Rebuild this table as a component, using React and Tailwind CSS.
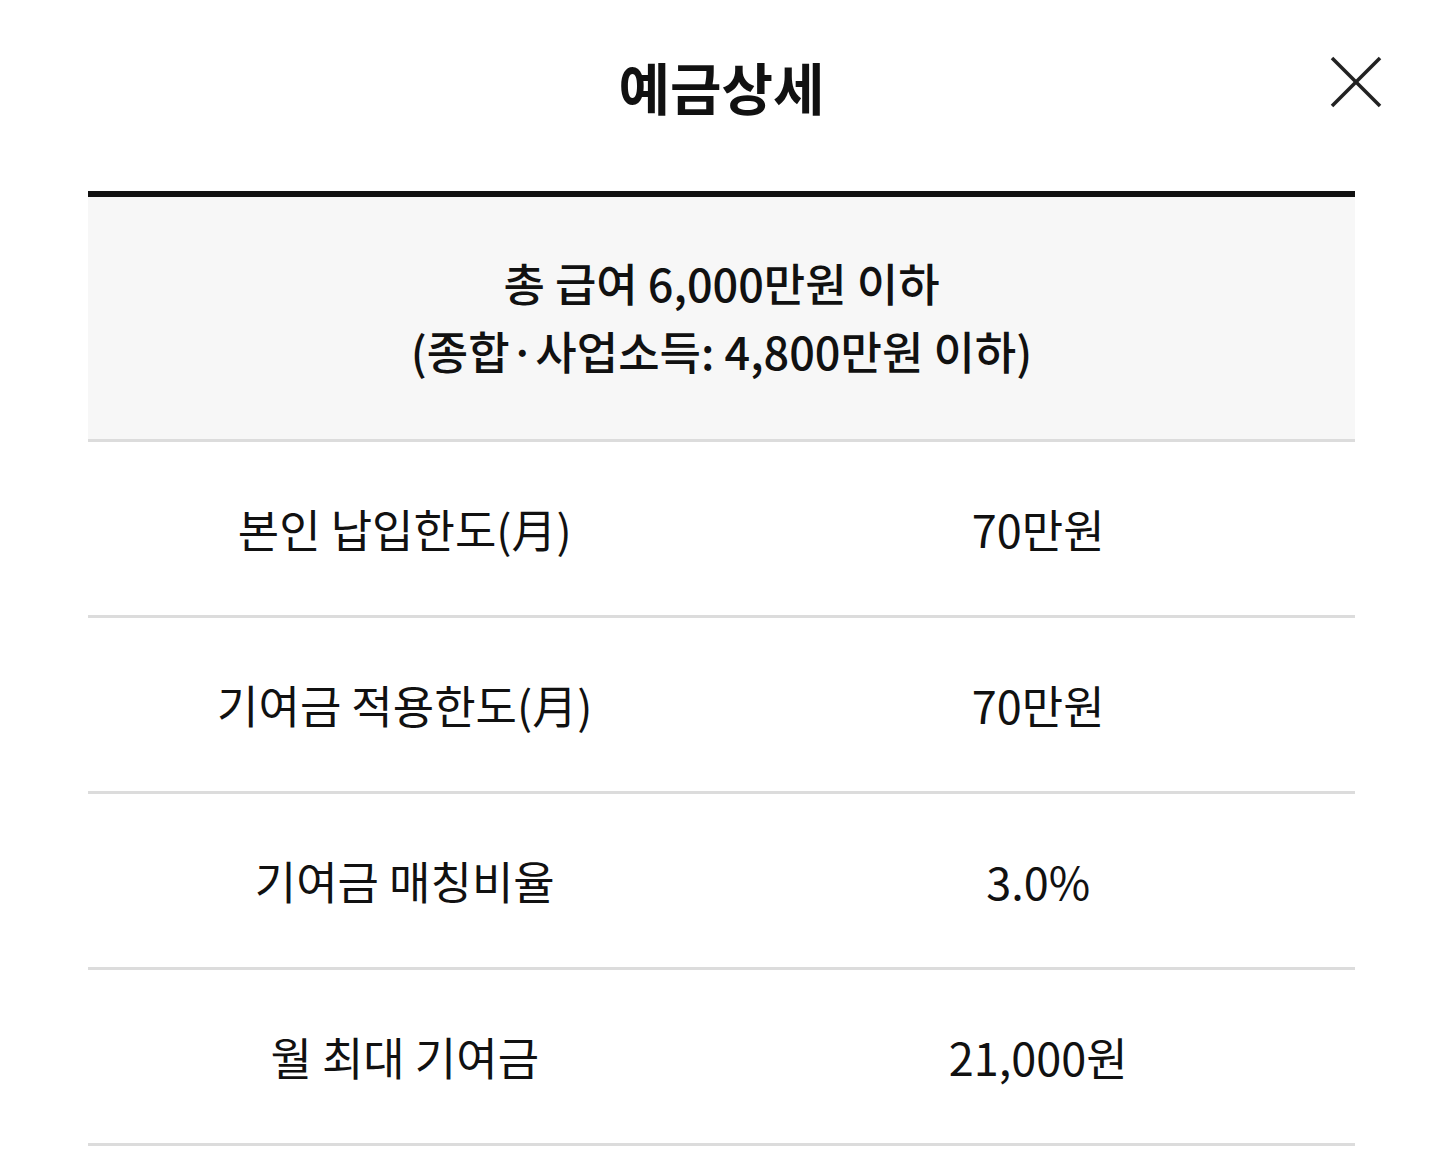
import React from 'react';

const rows = [
  { label: '본인 납입한도(月)', value: '70만원' },
  { label: '기여금 적용한도(月)', value: '70만원' },
  { label: '기여금 매칭비율', value: '3.0%' },
  { label: '월 최대 기여금', value: '21,000원' },
];

const DepositDetail = () => {
  return (
    <div
      className="w-[1430px] h-[1170px] bg-white text-[#111] overflow-hidden"
      style={{ fontFamily: '"Noto Sans CJK KR", "Noto Sans", sans-serif' }}
    >
      <header className="relative h-[191px]">
        <h1 className="pt-[46px] text-center text-[56px] leading-[80px] font-bold ml-[88px] w-[1267px]">
          예금상세
        </h1>
        <button className="absolute left-[1326px] top-[52px] w-[60px] h-[60px] flex items-center justify-center">
          <svg width="54" height="54" viewBox="0 0 54 54" fill="none" stroke="#222" strokeWidth="3.5">
            <line x1="3" y1="3" x2="51" y2="51" />
            <line x1="51" y1="3" x2="3" y2="51" />
          </svg>
        </button>
      </header>

      <div className="ml-[88px] w-[1267px] border-t-[6px] border-[#111]">
        <div className="h-[245px] bg-[#f7f7f7] border-b-[3px] border-[#dcdcdc] flex flex-col items-center justify-center text-[45px] font-medium leading-[68px]">
          <p className="mt-[-2px]">총 급여 6,000만원 이하</p>
          <p>(종합·사업소득: 4,800만원 이하)</p>
        </div>
        {rows.map((row) => (
          <div key={row.label} className="grid grid-cols-2 h-[176px] border-b-[3px] border-[#dcdcdc] text-[45px] items-center">
            <div className="text-center">{row.label}</div>
            <div className="text-center">{row.value}</div>
          </div>
        ))}
      </div>
    </div>
  );
};

export default DepositDetail;
